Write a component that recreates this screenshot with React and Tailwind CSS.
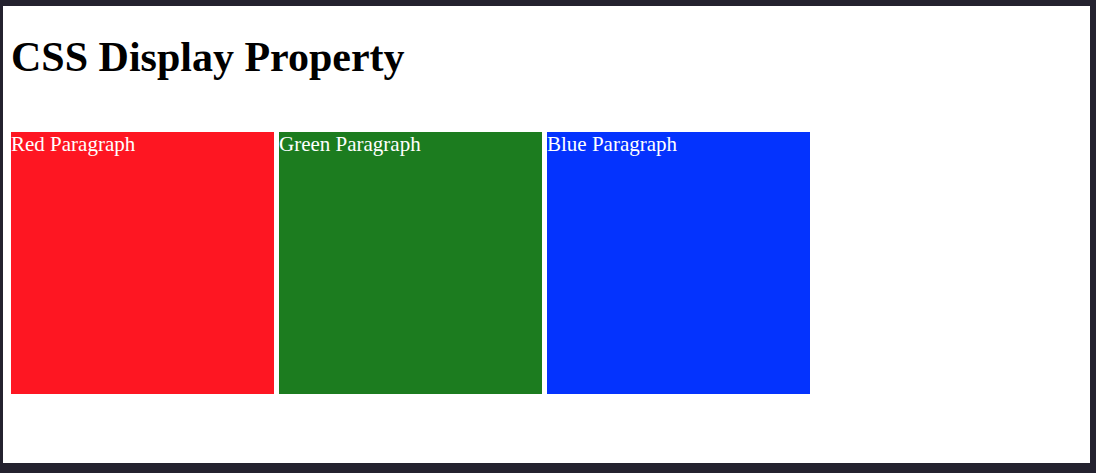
export default function App() {
  return (
    <div className="w-[1096px] h-[473px] bg-[#24222f] pl-[3px] pt-[6px] pr-[6px] pb-[10px]">
      <div className="w-full h-full bg-white pl-[8px] pt-[27px]" style={{ fontFamily: '"Liberation Serif", "Times New Roman", serif' }}>
        <h1 className="text-[42px] leading-[49px] font-bold text-black m-0">CSS Display Property</h1>
        <div className="flex gap-[5px] mt-[50px]">
          <div className="w-[263px] h-[262px] bg-[#fe1622] text-white text-[21px] leading-[24px]">Red Paragraph</div>
          <div className="w-[263px] h-[262px] bg-[#1c7c1f] text-white text-[21px] leading-[24px]">Green Paragraph</div>
          <div className="w-[263px] h-[262px] bg-[#0433fe] text-white text-[21px] leading-[24px]">Blue Paragraph</div>
        </div>
      </div>
    </div>
  );
}
